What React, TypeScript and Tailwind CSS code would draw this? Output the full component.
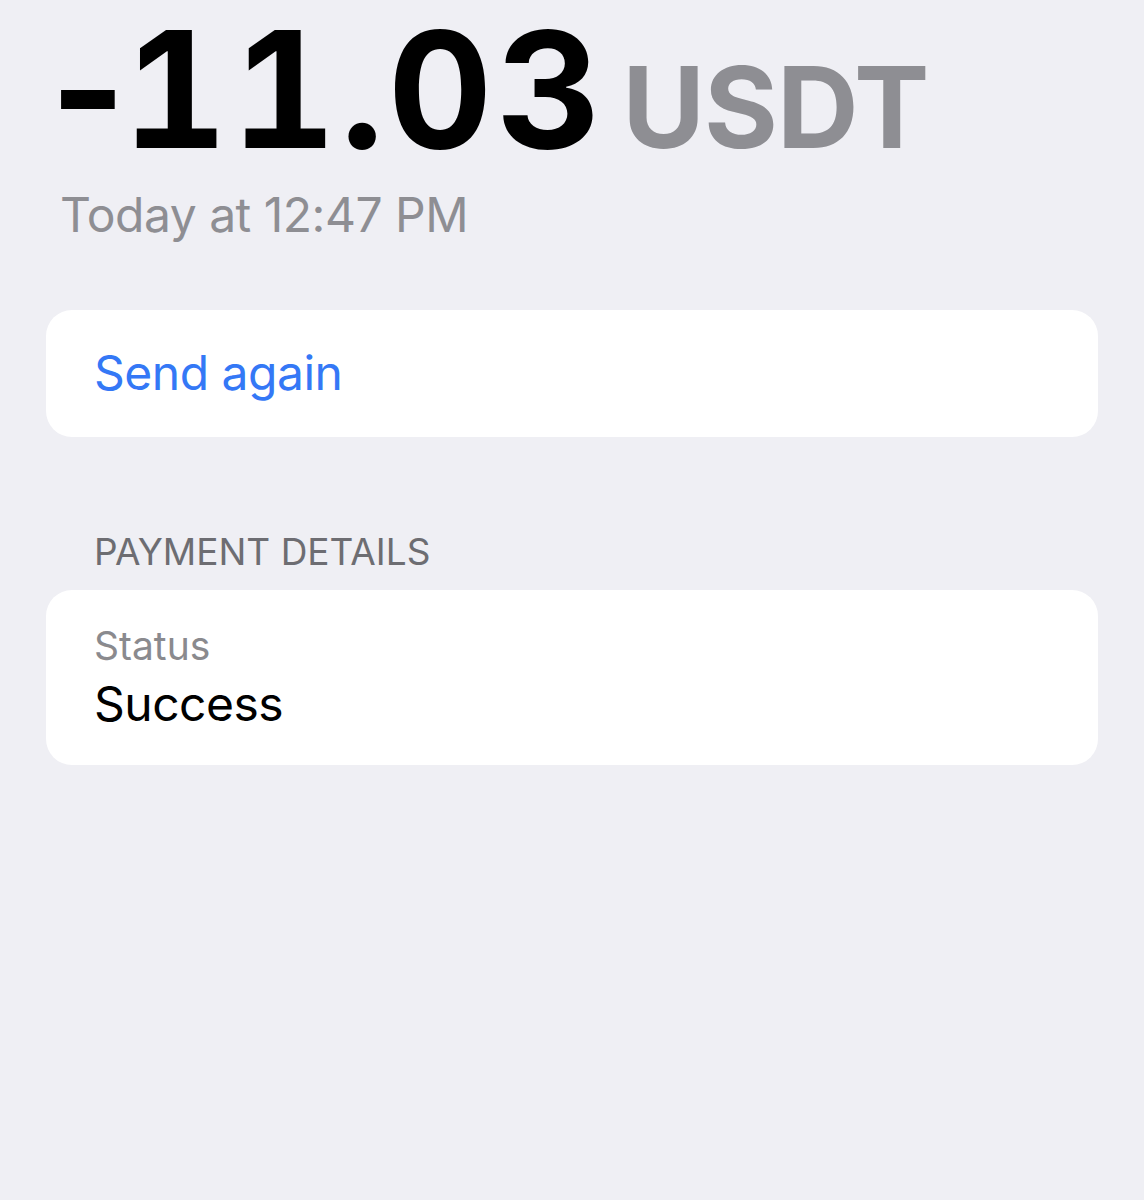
import React from "react";

export default function App() {
  return (
    <div className="min-h-[1200px] w-full bg-[#efeff4] font-['Inter',sans-serif] flex flex-col overflow-hidden">
      <div className="pl-[50px] -mt-[12px] flex items-baseline leading-[1.25]">
        <span className="text-[162px] font-bold text-black">-</span>
        <span className="-ml-[3px] text-[162px] font-bold text-black tabular-nums tracking-[4px]">11.03</span>
        <span className="ml-[17px] text-[113px] font-bold text-[#8e8e93] tracking-[-1px]">USDT</span>
      </div>
      <div className="pl-[60px] mt-[0px] text-[48px] leading-none text-[#8e8e93] tracking-[-0.5px]">
        Today at 12:47 PM
      </div>
      <div className="mx-[46px] mt-[71px] h-[127px] rounded-[26px] bg-white flex items-center px-[48px]">
        <span className="text-[48px] leading-none text-[#3478f6] tracking-[-0.5px]">Send again</span>
      </div>
      <div className="pl-[94px] mt-[96px] text-[37px] leading-none text-[#6d6d72]">
        PAYMENT DETAILS
      </div>
      <div className="mx-[46px] mt-[20px] h-[175px] rounded-[26px] bg-white flex flex-col justify-center px-[48px]">
        <span className="text-[39px] leading-none text-[#8a8a8e]">Status</span>
        <span className="mt-[15px] text-[48px] leading-none text-black tracking-[-0.5px]">Success</span>
      </div>
    </div>
  );
}
